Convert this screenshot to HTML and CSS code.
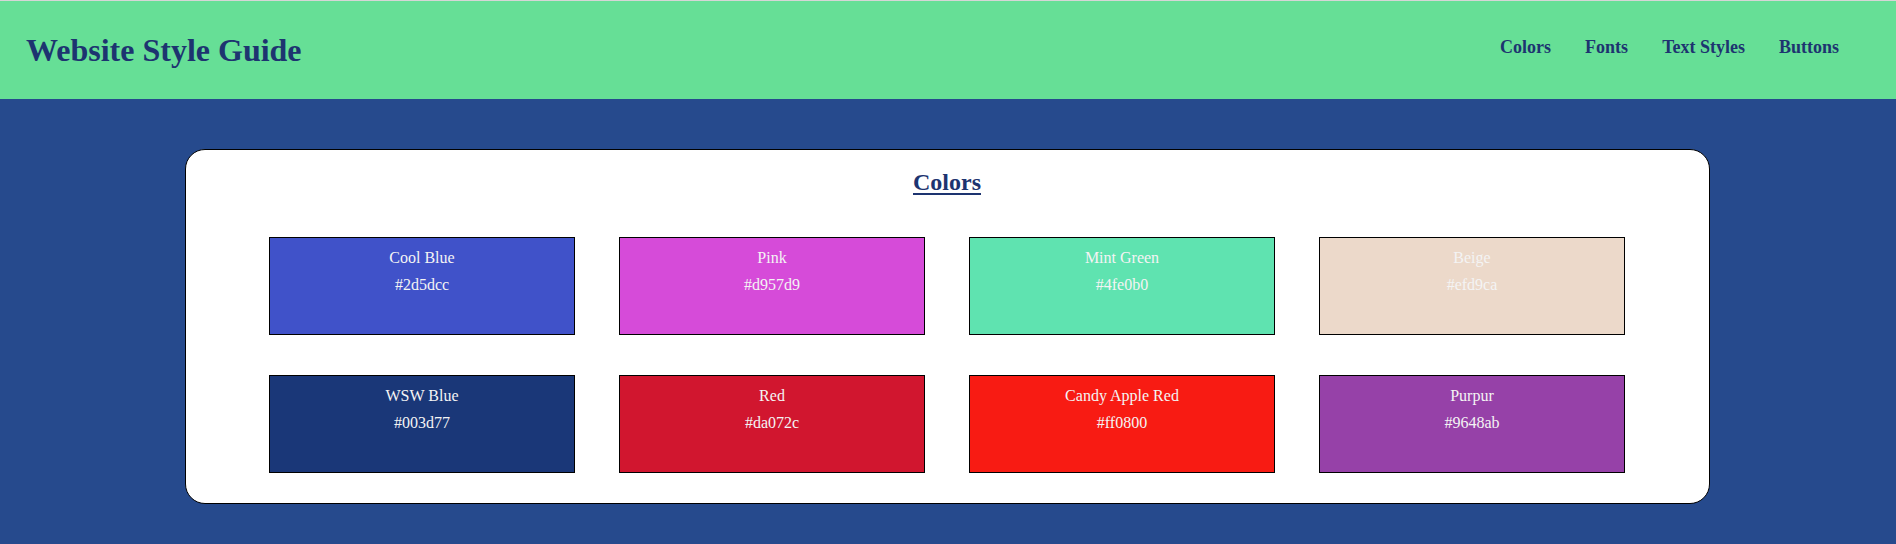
FILE: index.html
```html
<!DOCTYPE html>
<html lang="en">
<head>
<meta charset="utf-8">
<title>Website Style Guide</title>
<link rel="stylesheet" href="styles.css">
</head>
<body>
<header class="site-header">
  <h1 class="site-title">Website Style Guide</h1>
  <nav class="site-nav">
    <a href="#colors">Colors</a>
    <a href="#fonts">Fonts</a>
    <a href="#text-styles">Text Styles</a>
    <a href="#buttons">Buttons</a>
  </nav>
</header>
<main class="page">
  <section class="card" id="colors">
    <h2 class="card-title">Colors</h2>
    <div class="swatches">
      <div class="swatch cool-blue"><span>Cool Blue</span><span>#2d5dcc</span></div>
      <div class="swatch pink"><span>Pink</span><span>#d957d9</span></div>
      <div class="swatch mint"><span>Mint Green</span><span>#4fe0b0</span></div>
      <div class="swatch beige"><span>Beige</span><span>#efd9ca</span></div>
      <div class="swatch wsw-blue"><span>WSW Blue</span><span>#003d77</span></div>
      <div class="swatch red"><span>Red</span><span>#da072c</span></div>
      <div class="swatch candy"><span>Candy Apple Red</span><span>#ff0800</span></div>
      <div class="swatch purpur"><span>Purpur</span><span>#9648ab</span></div>
    </div>
  </section>
</main>
</body>
</html>
```
FILE: styles.css
```css
html, body {
  margin: 0;
  padding: 0;
}
body {
  background: #264a8d;
  font-family: "Liberation Serif", "Times New Roman", serif;
  min-height: 544px;
  border-top: 1px solid #d6d6d6;
  box-sizing: border-box;
}
.site-header {
  background: #66df96;
  height: 98px;
  display: flex;
  align-items: center;
  justify-content: space-between;
  padding: 0 57px 0 26px;
}
.site-title {
  margin: 0;
  font-size: 32px;
  line-height: 32px;
  font-weight: bold;
  color: #1d3470;
}
.site-nav {
  display: flex;
  gap: 34px;
  margin-bottom: 6px;
}
.site-nav a {
  font-size: 18px;
  line-height: 18px;
  font-weight: bold;
  color: #1d3470;
  text-decoration: none;
}
.page {
  padding-top: 50px;
}
.card {
  box-sizing: border-box;
  width: 1525px;
  margin-left: 185px;
  background: #ffffff;
  border: 1px solid #000000;
  border-radius: 20px;
  padding: 18px 0 30px 83px;
}
.card-title {
  margin: 0 0 41px 0;
  width: 1356px;
  text-align: center;
  font-size: 24px;
  line-height: 28px;
  font-weight: bold;
  color: #1d3470;
  text-decoration: underline;
  text-underline-offset: 3px;
}
.swatches {
  display: grid;
  grid-template-columns: repeat(4, 306px);
  grid-auto-rows: 98px;
  column-gap: 44px;
  row-gap: 40px;
}
.swatch {
  box-sizing: border-box;
  border: 1px solid #000000;
  padding-top: 6px;
  display: flex;
  flex-direction: column;
  align-items: center;
  color: #f4f4f4;
  font-size: 16px;
  line-height: 27px;
}
.cool-blue { background: #4052c9; }
.pink { background: #d64bd9; }
.mint { background: #5fe3b0; }
.beige { background: #ecd9ca; }
.wsw-blue { background: #1a3778; }
.red { background: #d1162f; }
.candy { background: #f81b13; }
.purpur { background: #9641a8; }
```
